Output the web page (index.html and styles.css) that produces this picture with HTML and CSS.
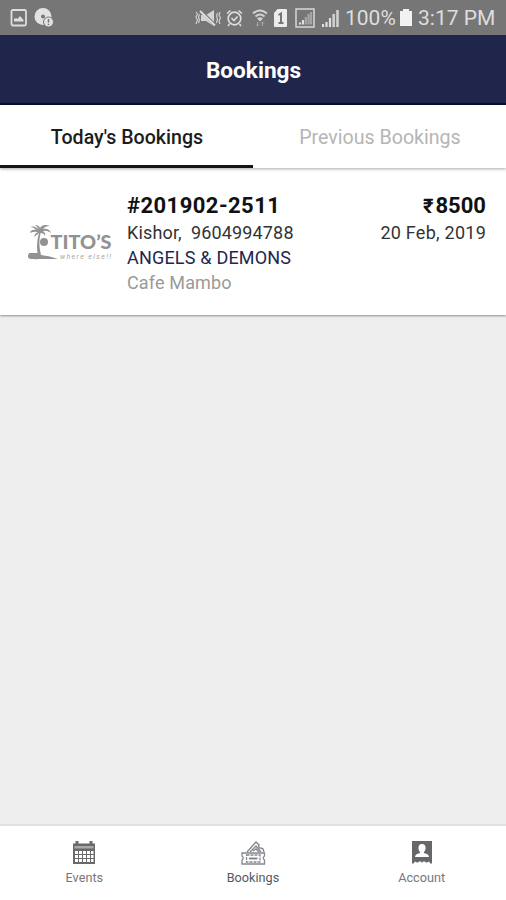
FILE: index.html
```html
<!DOCTYPE html>
<html lang="en">
<head>
    <meta charset="UTF-8">
    <meta name="viewport" content="width=device-width, initial-scale=1.0">
    <title>Bookings</title>
    <link rel="stylesheet" href="styles.css">
</head>
<body>
    <div class="status-bar">
        <!-- notifications -->
        <svg class="icon-image" width="17" height="18" viewBox="0 0 17 18">
            <rect x="1.500" y="1" width="14.5" height="15.5" rx="1.5" fill="none" stroke="#dedede" stroke-width="1.8"/>
            <path d="M4 12.500V10l2-1 1.500 1 2.500-3 3.500 4v1.500z" fill="#dedede"/>
        </svg>
        <svg class="icon-disc" width="21" height="20" viewBox="0 0 21 20">
            <circle cx="9" cy="8.500" r="8.500" fill="#e2e2e2"/>
            <circle cx="9" cy="8.500" r="2" fill="#767676"/>
            <circle cx="14.500" cy="14" r="5" fill="#e2e2e2" stroke="#767676"/>
            <path d="M14.500 11v3.500M14.500 15.700v1.300" stroke="#767676" stroke-width="1.500"/>
        </svg>

        <!-- system icons -->
        <svg class="icon-mute" width="27" height="18" viewBox="0 0 27 18">
            <path d="M6 6h5l8-5v16l-8-5H6z" fill="#d4d4d4"/>
            <path d="M6 2l14 14" stroke="#767676" stroke-width="3"/>
            <path d="M5 2l15 14.500" stroke="#dedede" stroke-width="1.800"/>
            <path d="M1 3l1.500 2L1 8l1.500 3L1 15M4.500 5L3.500 8l1 3-1 3M22.500 4l-1 3 1 3-1 4M25 3l-1 3 1.500 3-1.500 3 1 3" fill="none" stroke="#cfcfcf" stroke-width="1.200"/>
        </svg>
        <svg class="icon-alarm" width="17" height="18" viewBox="0 0 17 18">
            <circle cx="8.500" cy="9.500" r="6.300" fill="none" stroke="#dedede" stroke-width="1.700"/>
            <path d="M1 4.500L4.500 1.500M16 4.500l-3.500-3M3.500 15l-1.500 2M13.500 15l1.500 2M5.500 9l2.500 2.500 3.500-4" fill="none" stroke="#dedede" stroke-width="1.600"/>
        </svg>
        <svg class="icon-wifi" width="16" height="18" viewBox="0 0 16 18">
            <path d="M1 4.500q7-6 14 0M3.500 7.500q4.500-4 9 0" fill="none" stroke="#d2d2d2" stroke-width="2"/>
            <path d="M5 9.500q3-2.500 6 0l-3 3z" fill="#d2d2d2"/>
            <path d="M5.500 13v4M4 15.500l1.500 1.500L7 15.500M10.500 17v-4M9 14.500l1.500-1.500 1.500 1.500" fill="none" stroke="#a9a9a9"/>
        </svg>
        <svg class="icon-sim" width="13" height="18" viewBox="0 0 13 18">
            <path d="M3.500 0H12q1 0 1 1v16q0 1-1 1H1q-1 0-1-1V4z" fill="#ececec"/>
            <path d="M4.500 6L7 4.500V14M4.500 14h5" fill="none" stroke="#767676" stroke-width="2"/>
        </svg>
        <svg class="icon-signal-box" width="20" height="20" viewBox="0 0 20 20">
            <rect x="1" y="1" width="18" height="18" fill="none" stroke="#d8d8d8" stroke-width="1.500"/>
            <path d="M5 16.500v-2M8 16.500v-4.500" stroke="#e0e0e0" stroke-width="2.200"/>
            <path d="M10.800 16.500V9M13.500 16.500V6M16 16.500V4" stroke="#a5a5a5" stroke-width="2.200"/>
        </svg>
        <svg class="icon-signal" width="17" height="18" viewBox="0 0 17 18">
            <path d="M1 18v-3M4.500 18v-5M8 18V9" stroke="#dedede" stroke-width="2.200"/>
            <path d="M11.700 18V5M15.500 18V1" stroke="#d0d0d0" stroke-width="2.600"/>
        </svg>
        <span class="battery-level">100%</span>
        <svg class="icon-battery" width="12" height="17" viewBox="0 0 12 17">
            <path d="M3 0h6v2h3v15H0V2h3z" fill="#f2f2f2"/>
        </svg>
        <span class="clock">3:17 PM</span>
    </div>

    <header class="header">
        <h1 class="title">Bookings</h1>
    </header>

    <nav class="tabs">
        <div class="tab active"><span class="tab-text">Today's Bookings</span></div>
        <div class="tab"><span class="tab-text">Previous Bookings</span></div>
    </nav>

    <main class="content">
        <div class="booking">
            <svg class="logo" width="86" height="38" viewBox="0 0 86 38">
                <!-- palm and beach -->
                <path d="M12 6Q8 1 3 3Q7 3 9 6Q4 5 3 9Q7 7 11 8Q8 9 7 13Q11 10 12 9Q9 18 10.500 29H4Q1 29 2 31H12Q0 31 1 33Q4 36 12 35H31Q23 32 14 31Q11 20 13.500 9Q17 9 18 12Q19 9 16 7Q20 6 24 9Q22 4 16 5Q18 2 23 2Q16-1 13 4Q12 1 8 1Q11 3 12 6z" fill="#929292"/>
                <path d="M3 29h8v6H3q-2-1-2-3 0-2 2-3z" fill="#929292"/>
                <circle cx="17" cy="18" r="4" fill="#929292"/>
                <text class="logo-name" x="23.500" y="25" textLength="61" lengthAdjust="spacingAndGlyphs">TITO’S</text>
                <text class="logo-tagline" x="33" y="35" textLength="51">where else!!</text>
            </svg>
            <div class="details">
                <div class="number">#201902-2511</div>
                <div class="customer">Kishor,&nbsp; 9604994788</div>
                <div class="event">ANGELS &amp; DEMONS</div>
                <div class="venue">Cafe Mambo</div>
            </div>
            <div class="summary">
                <div class="price"><span class="currency">₹</span>8500</div>
                <div class="date">20 Feb, 2019</div>
            </div>
        </div>
    </main>

    <nav class="bottom-nav">
        <div class="nav-item">
            <svg width="24" height="24" viewBox="0 0 24 24">
                <path d="M1 2.500h22V23H1z" fill="#696969"/>
                <path d="M5 0v4M19 0v4" stroke="#696969" stroke-width="3"/>
                <path d="M2.500 5h19v2.500h-19z" fill="#aaa"/>
                <path d="M3 10h3v3H3zM7 10h3v3H7zM11 10h3v3h-3zM15 10h3v3h-3zM19 10h2.500v3H19zM3 14h3v3H3zM7 14h3v3H7zM11 14h3v3h-3zM15 14h3v3h-3zM19 14h2.500v3H19zM3 18h3v3H3zM7 18h3v3H7zM11 18h3v3h-3zM15 18h3v3h-3zM19 18h2.500v3H19z" fill="#fff"/>
            </svg>
            <span class="nav-text">Events</span>
        </div>
        <div class="nav-item selected">
            <svg width="26" height="24" viewBox="0 0 26 24">
                <path d="M7 11L16 1l3 3q-1 2 1 3 2 0 3 1l1 3M10 11l6-6 5 6M13 10l3-2 3 3" fill="none" stroke="#85888f" stroke-width="1.400"/>
                <path d="M2 12h22.500v3q-2.500 2 0 4v4H2v-4q2.500-2 0-4z" fill="#fff" stroke="#85888f" stroke-width="1.300"/>
                <path d="M6.500 14h13.500v7H6.500z" fill="none" stroke="#85888f" stroke-width="1.300" stroke-dasharray="3 1"/>
                <path d="M9 17.500h8.500" stroke="#7b7e85" stroke-width="1.800"/>
            </svg>
            <span class="nav-text">Bookings</span>
        </div>
        <div class="nav-item">
            <svg width="22" height="23" viewBox="0 0 22 23">
                <path d="M1 0h20v22.500h-1.500l-1.500-2-2 1h-1l-1-1h-2l-1 1.500-1-1.500H8l-1 1H6l-2-1-1.500 2H1z" fill="#65676a"/>
                <path d="M11 3q4 0 3.500 5-.5 2-1.500 3v1q5 1 5 4H4q0-3 5-4v-1Q8 10 7.500 8 7 3 11 3z" fill="#fff"/>
            </svg>
            <span class="nav-text">Account</span>
        </div>
    </nav>
</body>
</html>
```
FILE: styles.css
```css
* {
    box-sizing: border-box;
}

body {
    margin: 0;
    height: 900px;
    display: flex;
    flex-direction: column;
    background-color: #eee;
    font-family: Roboto, "Liberation Sans", sans-serif;
    overflow: hidden;
}

svg {
    display: block;
    flex-shrink: 0;
}

.status-bar {
    display: flex;
    align-items: center;
    height: 35px;
    padding: 0 11px 0 10px;
    background-color: #767676;
    color: #dedede;
    font-size: 21px;
    white-space: nowrap;
}

.icon-disc {
    margin-left: 7px;
}

.icon-mute {
    margin-left: auto;
}

.icon-alarm {
    margin-left: 4px;
}

.icon-wifi {
    margin-left: 9px;
}

.icon-sim {
    margin-left: 6px;
}

.icon-signal-box {
    margin-left: 8px;
}

.icon-signal {
    margin-left: 7px;
}

.battery-level {
    width: 50px;
    margin-left: 6px;
}

.icon-battery {
    margin-left: 5px;
}

.clock {
    width: 77px;
    margin-left: 6px;
}

.header {
    display: flex;
    align-items: center;
    justify-content: center;
    height: 70px;
    padding-top: 3px;
    background-color: #20264b;
    border-bottom: 2px solid #090c38;
}

.title {
    margin: 0;
    padding-left: 1px;
    color: #fff;
    font-size: 22.6px;
    font-weight: 700;
}

.tabs {
    display: flex;
    height: 63px;
    background-color: #fff;
    box-shadow: 0 1px 3px rgba(0, 0, 0, 0.35);
    z-index: 1;
}

.tab {
    flex: 1;
    display: flex;
    align-items: center;
    justify-content: center;
    padding-top: 5px;
    padding-left: 1px;
    border-bottom: 3px solid transparent;
    color: #b5b5b5;
    font-size: 19.6px;
}

.tab.active {
    color: #1c1c1c;
    border-bottom-color: #151515;
    font-weight: 500;
}

.content {
    flex: 1;
}

.booking {
    display: flex;
    height: 147px;
    padding: 24px 20px 0 27px;
    background-color: #fff;
    box-shadow: 0 1px 2px rgba(0, 0, 0, 0.4);
}

.logo {
    margin-top: 32px;
}

.logo-name {
    fill: #929292;
    font-family: Lato, sans-serif;
    font-size: 19px;
    font-weight: 900;
}

.logo-tagline {
    fill: #a5a5a5;
    font-size: 7px;
    font-style: italic;
}

.details {
    margin-left: 14px;
    color: #333;
    font-size: 18px;
    line-height: 25px;
    letter-spacing: 0.15px;
    white-space: nowrap;
}

.number,
.price {
    color: #111;
    font-size: 22px;
    font-weight: 700;
    line-height: 27px;
    height: 28px;
}

.number {
    letter-spacing: 0.45px;
}

.currency {
    margin-right: 2px;
    font-size: 20px;
}

.event {
    color: #20264f;
    letter-spacing: 0.2px;
}

.venue {
    color: #999;
}

.summary {
    margin-left: auto;
    color: #333;
    font-size: 18px;
    line-height: 25px;
    text-align: right;
}

.date {
    letter-spacing: 0.25px;
}

.bottom-nav {
    display: flex;
    height: 76px;
    background-color: #fff;
    border-top: 2px solid #e0e0e0;
}

.nav-item {
    flex: 1;
    display: flex;
    flex-direction: column;
    align-items: center;
    padding-top: 15px;
    color: #777;
    font-size: 12.7px;
}

.nav-text {
    margin-top: auto;
    margin-bottom: 14px;
    line-height: 16px;
}

.selected {
    color: #555961;
}
```
